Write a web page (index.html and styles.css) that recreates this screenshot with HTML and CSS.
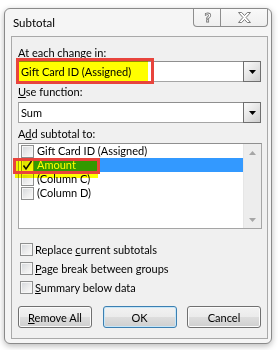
FILE: index.html
```html
<!DOCTYPE html>
<html>
<head>
<meta charset="utf-8">
<link rel="stylesheet" href="styles.css">
</head>
<body>
<div class="window">
  <div class="titlebar">
    <span class="title">Subtotal</span>
    <div class="caption">
      <div class="cap-btn help"><span class="q">?</span></div>
      <div class="cap-btn close">
        <svg width="13" height="11" viewBox="0 0 13 11"><path d="M0.5 0.5h3.2l2.8 3 2.8-3h3.2l-4.4 5 4.4 5h-3.2l-2.8-3-2.8 3h-3.2l4.4-5z" fill="#fff" stroke="#7c7c7c"/></svg>
      </div>
    </div>
  </div>
  <div class="client">
    <div class="label"><u>A</u>t each change in:</div>
    <div class="combo">
      <span class="combo-text">Gift Card ID (Assigned)</span>
      <span class="drop"><svg width="7" height="4" viewBox="0 0 7 4"><path d="M0 0h7l-3.5 4z" fill="#000"/></svg></span>
    </div>
    <div class="label gap2"><u>U</u>se function:</div>
    <div class="combo gap3">
      <span class="combo-text">Sum</span>
      <span class="drop"><svg width="7" height="4" viewBox="0 0 7 4"><path d="M0 0h7l-3.5 4z" fill="#000"/></svg></span>
    </div>
    <div class="label gap3">A<u>d</u>d subtotal to:</div>
    <div class="list">
      <div class="items">
        <div class="item"><span class="cb"></span><span class="item-text">Gift Card ID (Assigned)</span></div>
        <div class="item sel"><span class="cb"><svg width="11" height="11" viewBox="0 0 11 11"><path d="M1.5 5.5l2.5 3.5 5.5-8" fill="none" stroke="#111" stroke-width="1.5"/></svg></span><span class="item-text">Amount</span></div>
        <div class="item"><span class="cb"></span><span class="item-text">(Column C)</span></div>
        <div class="item"><span class="cb"></span><span class="item-text">(Column D)</span></div>
      </div>
      <div class="scroll">
        <span class="arr"><svg width="7" height="4" viewBox="0 0 7 4"><path d="M3.5 0l3.5 4h-7z" fill="#a6a6a6"/></svg></span>
        <span class="arr"><svg width="7" height="4" viewBox="0 0 7 4"><path d="M0 0h7l-3.5 4z" fill="#a6a6a6"/></svg></span>
      </div>
    </div>
    <div class="options">
      <div class="opt"><span class="cb"></span><span>Replace <u>c</u>urrent subtotals</span></div>
      <div class="opt"><span class="cb"></span><span><u>P</u>age break between groups</span></div>
      <div class="opt"><span class="cb"></span><span><u>S</u>ummary below data</span></div>
    </div>
    <div class="buttons">
      <button class="btn"><u>R</u>emove All</button>
      <button class="btn default">OK</button>
      <button class="btn">Cancel</button>
    </div>
  </div>
</div>
<div class="mark yellow mark1"></div>
<div class="box red1"></div>
<div class="mark yellow mark2"></div>
<div class="box red2"></div>
</body>
</html>
```
FILE: styles.css
```css
html, body {
  margin: 0;
  padding: 0;
}
body {
  box-sizing: border-box;
  width: 278px;
  height: 350px;
  padding: 8px 0 0 4px;
  background: #fff;
  position: relative;
  overflow: hidden;
  font-family: Lato, "Open Sans", sans-serif;
  font-size: 11px;
  color: #000;
}
u {
  text-decoration: underline;
  text-underline-offset: 1px;
}
.window {
  box-sizing: border-box;
  width: 268px;
  height: 336px;
  border: 1px solid #8a8a8a;
  border-radius: 6px;
  background: #f5f5f5;
  box-shadow: 0 2px 6px rgba(0, 0, 0, 0.28);
  display: flex;
  flex-direction: column;
}
.titlebar {
  height: 27px;
  display: flex;
  align-items: flex-start;
  flex: none;
}
.title {
  margin: 6px 0 0 8px;
  line-height: 15px;
  font-size: 11.5px;
  color: #000;
}
.caption {
  margin-left: auto;
  margin-right: 3px;
  display: flex;
  height: 18px;
}
.cap-btn {
  box-sizing: border-box;
  height: 18px;
  border: 1px solid #8e8e8e;
  border-top: none;
  background: linear-gradient(#f9f9f9, #efefef);
  display: flex;
  align-items: center;
  justify-content: center;
}
.help {
  width: 28px;
  border-radius: 0 0 0 4px;
}
.close {
  width: 47px;
  border-left: none;
  border-radius: 0 0 4px 0;
}
.q {
  font-family: "DejaVu Sans", sans-serif;
  font-weight: bold;
  font-size: 12px;
  line-height: 12px;
  color: #fff;
  -webkit-text-stroke: 0.8px #777;
  margin-left: 2px;
}
.client {
  box-sizing: border-box;
  flex: 1;
  margin: 0 3px 4px 6px;
  border: 1px solid #a9a9a9;
  background: #f0f0f0;
  padding: 8px 6px 0 6px;
  display: flex;
  flex-direction: column;
}
.label {
  line-height: 15px;
  height: 15px;
}
.gap2 { margin-top: 2px; }
.gap3 { margin-top: 3px; }
.combo {
  box-sizing: border-box;
  height: 21px;
  margin-top: 1px;
  border: 1px solid #a5a5a5;
  border-top-color: #8f8f8f;
  background: #fff;
  display: flex;
  align-items: center;
}
.combo.gap3 { margin-top: 3px; }
.combo-text {
  padding-left: 2px;
  line-height: 15px;
}
.drop {
  box-sizing: border-box;
  width: 18px;
  align-self: stretch;
  margin: -1px -1px -1px auto;
  border: 1px solid #6f6f6f;
  background: linear-gradient(135deg, #fafafa 0%, #e6e6e6 50%, #cdcdcd 100%);
  display: flex;
  align-items: center;
  justify-content: center;
}
.list {
  box-sizing: border-box;
  height: 86px;
  margin: 2px -1px 0 0;
  border: 1px solid #a5a5a5;
  border-top-color: #8f8f8f;
  background: #fff;
  display: flex;
}
.items {
  flex: 1;
  display: flex;
  flex-direction: column;
}
.item {
  height: 14px;
  display: flex;
  align-items: center;
}
.item .cb {
  margin: 0 0 0 2px;
}
.item-text {
  flex: 1;
  padding-left: 3px;
  line-height: 14px;
  height: 14px;
}
.sel .item-text {
  background: #3399ff;
  color: #fff;
}
.cb {
  box-sizing: border-box;
  width: 13px;
  height: 13px;
  flex: none;
  border: 1px solid #8e8f8f;
  background: linear-gradient(135deg, #d3d6da 0%, #eeeeee 60%, #fbfbfb 100%);
  box-shadow: inset 0 0 0 1px #f6f6f6;
  display: flex;
  align-items: center;
  justify-content: center;
}
.scroll {
  width: 17px;
  background: #ededed;
  border-left: 1px solid #e6e6e6;
  display: flex;
  flex-direction: column;
  justify-content: space-between;
}
.arr {
  height: 17px;
  display: flex;
  align-items: center;
  justify-content: center;
}
.options {
  margin-top: 11px;
  display: flex;
  flex-direction: column;
}
.opt {
  height: 19px;
  display: flex;
  align-items: center;
}
.opt .cb {
  margin: 0 2px 0 2px;
}
.buttons {
  margin-top: 9px;
  display: flex;
  justify-content: space-between;
}
.btn {
  box-sizing: border-box;
  width: 74px;
  height: 22px;
  padding: 0;
  font-family: inherit;
  font-size: 11px;
  color: #000;
  border: 1px solid #707070;
  border-radius: 3px;
  background: linear-gradient(#f2f2f2 0%, #ebebeb 50%, #dddddd 51%, #cfcfcf 100%);
  box-shadow: inset 0 0 0 1px #fbfbfb;
}
.btn.default {
  border-color: #3c7fb1;
  box-shadow: inset 0 0 0 1px #c6e6f8;
}
.mark {
  position: absolute;
  mix-blend-mode: multiply;
}
.yellow { background: #ffff00; }
.mark1 { left: 17px; top: 60px; width: 131px; height: 21px; }
.mark2 { left: 15px; top: 159px; width: 83px; height: 19px; }
.box {
  position: absolute;
  box-sizing: border-box;
  border: 3px solid #e8443c;
}
.red1 { left: 16px; top: 58px; width: 138px; height: 26px; }
.red2 { left: 13px; top: 158px; width: 87px; height: 16px; }
```
